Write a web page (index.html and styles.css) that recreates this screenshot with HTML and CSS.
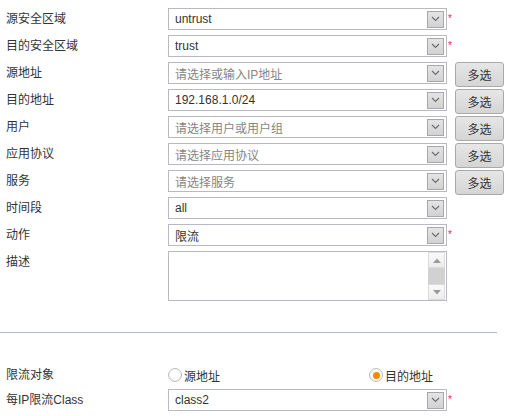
FILE: index.html
```html
<!DOCTYPE html>
<html>
<head>
<meta charset="utf-8">
<link rel="stylesheet" href="styles.css">
</head>
<body>
<div class="form">
  <div class="row">
    <div class="lbl">源安全区域</div>
    <div class="select"><span class="val">untrust</span><span class="arrow"><svg width="9" height="6" viewBox="0 0 9 6"><polyline points="1,1 4.5,4.5 8,1" fill="none" stroke="#6e6e6e" stroke-width="1.2"/></svg></span></div>
    <span class="req">*</span>
  </div>
  <div class="row">
    <div class="lbl">目的安全区域</div>
    <div class="select"><span class="val">trust</span><span class="arrow"><svg width="9" height="6" viewBox="0 0 9 6"><polyline points="1,1 4.5,4.5 8,1" fill="none" stroke="#6e6e6e" stroke-width="1.2"/></svg></span></div>
    <span class="req">*</span>
  </div>
  <div class="row">
    <div class="lbl">源地址</div>
    <div class="select"><span class="val ph">请选择或输入IP地址</span><span class="arrow"><svg width="9" height="6" viewBox="0 0 9 6"><polyline points="1,1 4.5,4.5 8,1" fill="none" stroke="#6e6e6e" stroke-width="1.2"/></svg></span></div>
    <button class="btn">多选</button>
  </div>
  <div class="row">
    <div class="lbl">目的地址</div>
    <div class="select"><span class="val">192.168.1.0/24</span><span class="arrow"><svg width="9" height="6" viewBox="0 0 9 6"><polyline points="1,1 4.5,4.5 8,1" fill="none" stroke="#6e6e6e" stroke-width="1.2"/></svg></span></div>
    <button class="btn">多选</button>
  </div>
  <div class="row">
    <div class="lbl">用户</div>
    <div class="select"><span class="val ph">请选择用户或用户组</span><span class="arrow"><svg width="9" height="6" viewBox="0 0 9 6"><polyline points="1,1 4.5,4.5 8,1" fill="none" stroke="#6e6e6e" stroke-width="1.2"/></svg></span></div>
    <button class="btn">多选</button>
  </div>
  <div class="row">
    <div class="lbl">应用协议</div>
    <div class="select"><span class="val ph">请选择应用协议</span><span class="arrow"><svg width="9" height="6" viewBox="0 0 9 6"><polyline points="1,1 4.5,4.5 8,1" fill="none" stroke="#6e6e6e" stroke-width="1.2"/></svg></span></div>
    <button class="btn">多选</button>
  </div>
  <div class="row">
    <div class="lbl">服务</div>
    <div class="select"><span class="val ph">请选择服务</span><span class="arrow"><svg width="9" height="6" viewBox="0 0 9 6"><polyline points="1,1 4.5,4.5 8,1" fill="none" stroke="#6e6e6e" stroke-width="1.2"/></svg></span></div>
    <button class="btn">多选</button>
  </div>
  <div class="row">
    <div class="lbl">时间段</div>
    <div class="select"><span class="val">all</span><span class="arrow"><svg width="9" height="6" viewBox="0 0 9 6"><polyline points="1,1 4.5,4.5 8,1" fill="none" stroke="#6e6e6e" stroke-width="1.2"/></svg></span></div>
  </div>
  <div class="row">
    <div class="lbl">动作</div>
    <div class="select"><span class="val">限流</span><span class="arrow"><svg width="9" height="6" viewBox="0 0 9 6"><polyline points="1,1 4.5,4.5 8,1" fill="none" stroke="#6e6e6e" stroke-width="1.2"/></svg></span></div>
    <span class="req">*</span>
  </div>
  <div class="row row-ta">
    <div class="lbl">描述</div>
    <div class="textarea">
      <div class="ta-body"></div>
      <div class="sb">
        <span class="sb-btn"><svg width="8" height="5" viewBox="0 0 8 5"><polygon points="0,5 4,0.5 8,5" fill="#9a9a9a"/></svg></span>
        <span class="sb-thumb"></span>
        <span class="sb-btn"><svg width="8" height="5" viewBox="0 0 8 5"><polygon points="0,0 8,0 4,4.5" fill="#9a9a9a"/></svg></span>
      </div>
    </div>
  </div>
</div>

<div class="divider"></div>

<div class="form form2">
  <div class="row row-radio">
    <div class="lbl">限流对象</div>
    <div class="radios">
      <label class="opt opt-first"><span class="radio"></span>源地址</label>
      <label class="opt"><span class="radio on"></span>目的地址</label>
    </div>
  </div>
  <div class="row">
    <div class="lbl">每IP限流Class</div>
    <div class="select"><span class="val">class2</span><span class="arrow"><svg width="9" height="6" viewBox="0 0 9 6"><polyline points="1,1 4.5,4.5 8,1" fill="none" stroke="#6e6e6e" stroke-width="1.2"/></svg></span></div>
    <span class="req">*</span>
  </div>
</div>
</body>
</html>
```

FILE: styles.css
```css
* { box-sizing: border-box; }

body {
  margin: 0;
  background: #fff;
  font-family: "Liberation Sans", "Noto Sans CJK SC", sans-serif;
  font-size: 12px;
  color: #333;
  overflow: hidden;
}

.form {
  padding-top: 8px;
}

.row {
  display: grid;
  grid-template-columns: 168px 279px 64px;
  align-items: start;
  height: 27px;
}

.lbl {
  padding-left: 6px;
  line-height: 22px;
  white-space: nowrap;
  color: #333;
}

.select {
  height: 22px;
  border: 1px solid #b9b9c4;
  background: #fff;
  display: flex;
  align-items: center;
  padding-left: 6px;
}

.val {
  flex: 1;
  color: #333;
  white-space: nowrap;
  overflow: hidden;
}

.val.ph {
  color: #858585;
}

.arrow {
  width: 17px;
  height: 17px;
  margin-right: 2px;
  border: 1px solid #a8a8a8;
  background: linear-gradient(#e4e4e4, #d2d2d2);
  display: flex;
  align-items: center;
  justify-content: center;
}

.req {
  color: #ee2266;
  font-size: 10px;
  line-height: 10px;
  margin-left: 1px;
  margin-top: 6px;
}

.btn {
  margin-left: 8px;
  width: 49px;
  height: 25px;
  padding: 0;
  border: 1px solid #a9a9a9;
  border-radius: 3px;
  background: linear-gradient(#e6e6e6, #d5d5d5);
  font-family: "Liberation Sans", "Noto Sans CJK SC", sans-serif;
  font-size: 12px;
  color: #333;
}

.row-ta {
  height: 50px;
}

.textarea {
  height: 50px;
  border: 1px solid #b9b9c4;
  display: flex;
  background: #fff;
}

.ta-body {
  flex: 1;
}

.sb {
  width: 17px;
  margin-right: 1px;
  display: flex;
  flex-direction: column;
}

.sb-btn {
  height: 16px;
  background: linear-gradient(#fafafa, #ececec);
  border: 1px solid #dcdcdc;
  display: flex;
  align-items: center;
  justify-content: center;
}

.sb-thumb {
  flex: 1;
  background: #d1d1d1;
}

.divider {
  margin-top: 31px;
  width: 497px;
  height: 1px;
  background: #b4b7c7;
}

.form2 {
  padding-top: 31px;
}

.row-radio {
  height: 25px;
}

.radios {
  display: flex;
  grid-column: 2 / span 2;
}

.opt {
  display: flex;
  align-items: center;
  height: 22px;
  color: #333;
  white-space: nowrap;
}

.opt-first {
  width: 201px;
}

.radio {
  width: 14px;
  height: 14px;
  border-radius: 50%;
  border: 1px solid #bcbcbc;
  background: radial-gradient(circle at 50% 40%, #fff 40%, #ededed 100%);
  margin-right: 2px;
  display: flex;
  align-items: center;
  justify-content: center;
}

.radio.on::after {
  content: "";
  width: 7px;
  height: 7px;
  border-radius: 50%;
  background: #f28a00;
}
```
